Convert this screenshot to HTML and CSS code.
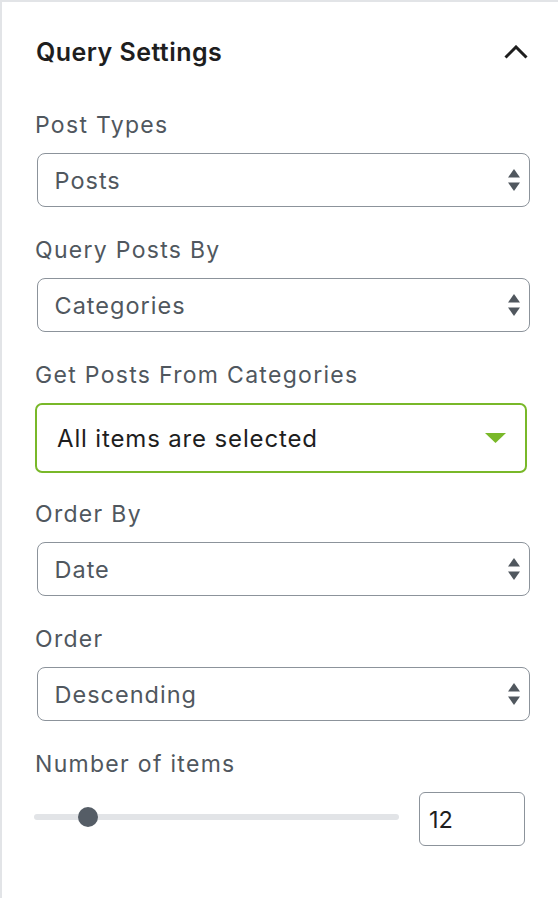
FILE: index.html
```html
<!DOCTYPE html>
<html lang="en">
<head>
<meta charset="utf-8">
<title>Query Settings</title>
<link rel="stylesheet" href="styles.css">
</head>
<body>
<div class="panel">
  <div class="panel-header">
    <h2 class="panel-title">Query Settings</h2>
    <svg class="chevron" width="24" height="14" viewBox="0 0 24 14"><polyline points="1.5,12.5 12,2 22.5,12.5" fill="none" stroke="#1e1e1e" stroke-width="3"/></svg>
  </div>

  <div class="field">
    <div class="label">Post Types</div>
    <div class="select"><span>Posts</span><svg class="updown" width="12" height="22" viewBox="0 0 12 22"><polygon points="0,8.5 6,0 12,8.5" /><polygon points="0,13.5 12,13.5 6,22" /></svg></div>
  </div>

  <div class="field">
    <div class="label">Query Posts By</div>
    <div class="select"><span>Categories</span><svg class="updown" width="12" height="22" viewBox="0 0 12 22"><polygon points="0,8.5 6,0 12,8.5" /><polygon points="0,13.5 12,13.5 6,22" /></svg></div>
  </div>

  <div class="field field-multi">
    <div class="label">Get Posts From Categories</div>
    <div class="multiselect"><span>All items are selected</span><svg class="caret" width="21" height="10" viewBox="0 0 21 10"><polygon points="0,0 21,0 10.5,10" /></svg></div>
  </div>

  <div class="field">
    <div class="label">Order By</div>
    <div class="select"><span>Date</span><svg class="updown" width="12" height="22" viewBox="0 0 12 22"><polygon points="0,8.5 6,0 12,8.5" /><polygon points="0,13.5 12,13.5 6,22" /></svg></div>
  </div>

  <div class="field">
    <div class="label">Order</div>
    <div class="select"><span>Descending</span><svg class="updown" width="12" height="22" viewBox="0 0 12 22"><polygon points="0,8.5 6,0 12,8.5" /><polygon points="0,13.5 12,13.5 6,22" /></svg></div>
  </div>

  <div class="field">
    <div class="label">Number of items</div>
    <div class="range-row">
      <div class="range"><div class="thumb" style="left: 14.8%"></div></div>
      <div class="number">12</div>
    </div>
  </div>
</div>
</body>
</html>
```

FILE: styles.css
```css
html, body {
  margin: 0;
  padding: 0;
  background: #ffffff;
}

body {
  font-family: Inter, "Noto Sans", sans-serif;
}

.panel {
  box-sizing: border-box;
  min-height: 898px;
  border-top: 2px solid #e2e4e7;
  border-left: 2px solid #e2e4e7;
  padding: 35px 28px 0 33px;
}

.panel-header {
  display: flex;
  align-items: center;
  justify-content: space-between;
  height: 30px;
  margin-bottom: 44px;
}

.panel-title {
  margin: 0 0 0 1px;
  font-size: 25px;
  line-height: 30px;
  font-weight: 600;
  letter-spacing: 0.45px;
  color: #1e1e1e;
}

.chevron {
  display: block;
  margin-right: 2px;
}

.field {
  margin-bottom: 29px;
}

.field-multi {
  margin-bottom: 27px;
}

.label {
  font-size: 23px;
  line-height: 28px;
  letter-spacing: 1.3px;
  color: #50575e;
  margin-bottom: 14px;
}

.select {
  box-sizing: border-box;
  height: 54px;
  margin-left: 2px;
  border: 1.5px solid #8c939b;
  border-radius: 8px;
  display: flex;
  align-items: center;
  justify-content: space-between;
  padding: 0 9.5px 0 16.5px;
  font-size: 23.5px;
  letter-spacing: 1px;
  color: #50575e;
}

.updown {
  display: block;
  fill: #50575e;
}

.multiselect {
  box-sizing: border-box;
  height: 70px;
  margin-right: 3px;
  border: 2px solid #79b829;
  border-radius: 7px;
  display: flex;
  align-items: center;
  justify-content: space-between;
  padding: 0 19px 0 20px;
  font-size: 24px;
  letter-spacing: 0.85px;
  color: #1e1e1e;
}

.caret {
  display: block;
  fill: #79b829;
}

.range-row {
  display: flex;
  align-items: center;
  gap: 20px;
  margin-left: -1px;
  margin-right: 5px;
}

.range {
  flex: 1;
  position: relative;
  height: 6px;
  border-radius: 3px;
  background: #e2e4e7;
  margin-top: -5px;
}

.thumb {
  position: absolute;
  top: 50%;
  width: 20px;
  height: 20px;
  margin: -10px 0 0 -10px;
  border-radius: 50%;
  background: #555d66;
}

.number {
  box-sizing: border-box;
  width: 106px;
  height: 54px;
  border: 1.5px solid #8c939b;
  border-radius: 6px;
  display: flex;
  align-items: center;
  padding-left: 9px;
  font-size: 23.5px;
  color: #1e1e1e;
}
```
